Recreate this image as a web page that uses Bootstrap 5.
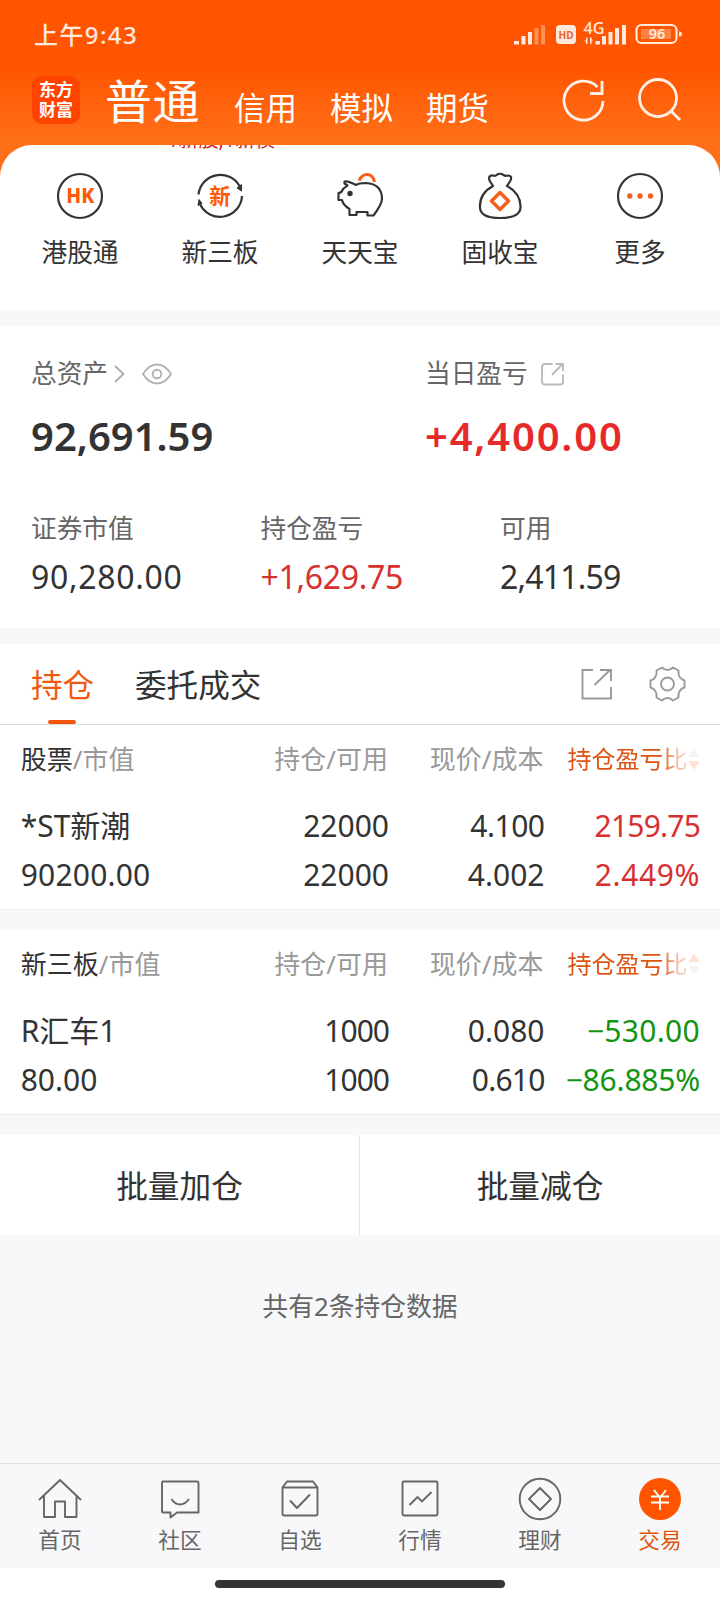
<!DOCTYPE html>
<html lang="zh-CN">
<head>
<meta charset="utf-8">
<meta name="viewport" content="width=device-width, initial-scale=1">
<title>交易</title>
<link rel="stylesheet" href="https://cdn.jsdelivr.net/npm/bootstrap@5.3.0/dist/css/bootstrap.min.css">
<style>
body{font-family:"Noto Sans","Noto Sans CJK SC",sans-serif;color:#333;background:#f7f8fa;width:720px;height:1600px;overflow:hidden}
svg{display:block;flex:none;overflow:visible}
.app{height:1600px}
.top{height:177px;background:linear-gradient(#ff5500 66px,#ff6f18 140px);color:#fff}
.status{height:70px;padding:0 38px 0 34px}
.clock{font-size:24px;line-height:70px;font-weight:500;color:#ffe9dd;letter-spacing:1.400px}
.heads{height:75px;padding:0 38px 0 32px}
.logo{width:48px;height:48px;border-radius:10px;background:#ff4400;margin-top:6px;font-size:17px;font-weight:700;line-height:20px;text-align:center;padding-top:4px}
.h-main{font-size:47px;line-height:62px;margin-left:25px;margin-right:2px;letter-spacing:.5px;font-weight:400}
.h-sub{font-size:31.500px;line-height:40px;margin-top:18px;margin-left:32px;width:64px}
.sheet{margin-top:-32px;height:165px;border-radius:32px 32px 0 0;background:#fff;position:relative}
.hint{height:5px;overflow:hidden;padding-left:167px;color:#cf1f28;font-size:20px;line-height:20px}
.quick{padding:0 10px;height:130px}
.quick>div{width:140px;padding-top:21px}
.quick span{font-size:25.700px;line-height:36px;margin-top:14px}
.gap16{height:16px}
.assets{height:302px}
.lab{font-size:25.700px;line-height:36px;color:#666}
.big{font-size:40px;line-height:50px;font-weight:600}
.mid{font-size:32px;line-height:42px}
.up{color:#d63030}.down{color:#139413}
.big.up{color:#e62a29}
.tabs{height:81px;border-bottom:1px solid #dcdcdc;padding:0 34px 0 31px;font-size:31.600px;line-height:83px}
.tabs .on{color:#ef5a10;position:relative;width:64px}
.tabs .on::after{content:"";position:absolute;left:17px;top:77px;width:28px;height:4px;border-radius:2px;background:#f2560d}
.hold{padding:0 20px;border-bottom:1px solid #e9eaed}
.hold .line{display:grid;grid-template-columns:221px 148px 155.500px 155.500px;text-align:right;font-size:30px;line-height:49px;white-space:nowrap;position:relative;top:.5px}
.hold .line>:first-child{text-align:left;padding-left:.7px}
.hold .head{font-size:26px;line-height:66px;color:#999;margin-bottom:9px}
.hold .head>:nth-child(2),.hold .head>:nth-child(3){padding-right:1px}
.dark{color:#333}
.hold .sortcol{padding-left:23px;font-size:24px;color:#dc5413;-webkit-mask-image:linear-gradient(90deg,#000 74%,rgba(0,0,0,.35) 86%,rgba(0,0,0,.17) 95%);mask-image:linear-gradient(90deg,#000 74%,rgba(0,0,0,.35) 86%,rgba(0,0,0,.17) 95%)}
.batch{height:100px;font-size:31.700px;line-height:102px;text-align:center}
.batch>div:first-child{width:359px}
.batch>div+div{border-left:1px solid #e8e8ea}
.foot{font-size:25.800px;line-height:36px;color:#666;padding-top:53px;height:228px}
.tabbar{height:105px;border-top:1px solid #dedfe1;background:#f8f8fb}
.tabbar>div{width:120px;padding-top:13px;color:#666}
.tabbar span{font-size:21.700px;line-height:30px;margin-top:4px}
.homebar{height:32px}
.homebar i{width:290px;height:8px;border-radius:4px;background:#333;margin-top:12px}
</style>
</head>
<body>
<div class="app d-flex flex-column">
<header class="top flex-shrink-0">
  <div class="status d-flex justify-content-between">
    <div class="clock">上午9:43</div>
    <svg width="170" height="70" viewBox="512 0 170 70" fill="#ffe9dd">
      <path d="M514 41h5v3.500h-5zM521.500 36h4v8.500h-4zM528 32h4v12.500h-4z"/>
      <path d="M534.500 28h4v16.500h-4zM541 25h4v19.500h-4z" opacity=".4"/>
      <rect x="556" y="25" width="20" height="19" rx="4"/>
      <text x="566" y="38.500" font-size="10.500" font-weight="700" text-anchor="middle" textLength="15" lengthAdjust="spacingAndGlyphs" fill="#e8662c">HD</text>
      <text x="583.500" y="33.500" font-size="15.500" font-weight="500" textLength="21" lengthAdjust="spacingAndGlyphs">4G</text>
      <path d="M587.500 37.500v6.500h-1.500v-2l-2-1.500h2v-3zM590 44v-6.500h1.500v1.500l2 1.500h-2v3.500z"/>
      <path d="M595.500 41h4.500v3.500h-4.500zM602 36h4v8.500h-4zM608.500 32h4v12.500h-4zM615 28h4v16.500h-4zM622 25h4v19.500h-4z"/>
      <rect x="636.500" y="25" width="40" height="18" rx="5" fill="none" stroke="#ffe9dd" stroke-width="2.200"/>
      <rect x="641" y="29" width="30" height="10" opacity=".3"/>
      <path d="M679 31.500q3 0 3 2.500t-3 2.500z"/>
      <text x="657" y="39.200" font-size="14.500" font-weight="600" text-anchor="middle">96</text>
    </svg>
  </div>
  <div class="heads d-flex">
    <div class="logo">东方<br>财富</div>
    <div class="h-main">普通</div>
    <div class="h-sub">信用</div><div class="h-sub">模拟</div><div class="h-sub">期货</div>
    <svg class="ms-auto" width="122" height="60" viewBox="560 70 122 60" fill="none" stroke="#fff1e8" stroke-width="2.800">
      <path d="M603 101A19.500 19.500 0 1 1 597.500 87M602 81v12.500H590"/>
      <circle cx="658" cy="98" r="18.500"/><path d="M671 111l9 9"/>
    </svg>
  </div>
</header>
<section class="sheet flex-shrink-0">
  <div class="hint d-flex align-items-end">1新股,1新债</div>
  <div class="quick d-flex">
    <div class="d-flex flex-column align-items-center">
      <svg width="50" height="50" viewBox="0 0 50 50"><circle cx="25" cy="25" r="22" fill="none" stroke="#333" stroke-width="2.200"/><text x="25.300" y="32.300" font-size="20.500" font-weight="800" text-anchor="middle" textLength="28" lengthAdjust="spacingAndGlyphs" fill="#ff5a0a">HK</text></svg><span>港股通</span></div>
    <div class="d-flex flex-column align-items-center">
      <svg width="50" height="50" viewBox="0 0 50 50"><path d="M3.500 23.500A22 22 0 0 1 44.500 15M47 25A22 22 0 0 1 5 33" fill="none" stroke="#333" stroke-width="2.200"/><path d="M42 17l4.500-3.500v6.500zM3 34.500l1-6 3 4z" fill="#333" stroke="#333"/><text x="25" y="32.500" font-size="21.500" font-weight="700" text-anchor="middle" fill="#ff5a0a">新</text></svg><span>新三板</span></div>
    <div class="d-flex flex-column align-items-center">
      <svg width="50" height="50" viewBox="0 0 50 50" fill="none" stroke="#333" stroke-width="2.200" stroke-linejoin="round"><path d="M21 14Q24 12 31 12Q47 13 47 28Q47 33 38.500 44.500H32.500V41H21.500V44H14.500V38Q8 34 7 29H3.500V22Q6.500 22 8 18L12.500 14.500L9.500 12.500V10.500Q13 9.500 21 14Z"/><circle cx="15" cy="22.500" r="1.600" fill="#333"/><path d="M24 9.500Q27 3.500 32 3.500Q38 3.500 39.500 11" stroke="#f4601a" stroke-width="3"/></svg><span>天天宝</span></div>
    <div class="d-flex flex-column align-items-center">
      <svg width="50" height="50" viewBox="0 0 50 50" fill="none" stroke="#333" stroke-width="2.200" stroke-linejoin="round"><path d="M18 15L14.500 9.500Q13 4 18 4.500Q20.500 5.500 21.500 4Q25 1.500 28.500 4Q30.500 5.500 33 4.500Q37.500 4.500 35.500 9.500L32 15Q45 22 45.500 35Q46.500 47 25 47Q4 47 5 35Q5 22 18 15Z"/><path d="M25 21.500L33.500 30L25 38.500L16.500 30Z" stroke="#f4601a" stroke-width="3.500"/></svg><span>固收宝</span></div>
    <div class="d-flex flex-column align-items-center">
      <svg width="50" height="50" viewBox="0 0 50 50"><circle cx="25" cy="25" r="22" fill="none" stroke="#333" stroke-width="2.200"/><g fill="#f4601a"><circle cx="14.800" cy="25" r="2.700"/><circle cx="25" cy="25" r="2.700"/><circle cx="35.500" cy="25" r="2.700"/></g></svg><span>更多</span></div>
  </div>
</section>
<div class="gap16 flex-shrink-0"></div>
<section class="assets bg-white flex-shrink-0">
  <div class="d-flex" style="padding:30px 0 0 31px">
    <div style="width:394px">
      <div class="lab d-flex align-items-center">总资产
        <svg width="12" height="18" style="margin-left:6px" viewBox="0 0 12 18" fill="none" stroke="#aaa" stroke-width="1.800"><path d="M1 1l8.500 8L1 17"/></svg>
        <svg width="32" height="22" style="margin-left:15px" viewBox="0 0 32 22" fill="none" stroke="#b3b3b3" stroke-width="1.900"><path d="M2 11Q8 1.500 16 1.500T30 11Q24 20.500 16 20.500T2 11Z"/><circle cx="16" cy="11" r="4.300"/></svg></div>
      <div class="big" style="margin-top:19px">92,691.59</div>
    </div>
    <div>
      <div class="lab d-flex align-items-center">当日盈亏
        <svg width="24" height="24" style="margin-left:12px" viewBox="0 0 24 24" fill="none" stroke="#bbb" stroke-width="1.900"><path d="M12.500 2H5Q2 2 2 5v15q0 2.500 3 2.500h15q3 0 3-2.500v-7.500M12 13L22.500 2M15.500 2H23v7"/></svg></div>
      <div class="big up" style="margin-top:19px;letter-spacing:1.800px">+4,400.00</div>
    </div>
  </div>
  <div class="d-flex" style="padding:50px 0 0 31px">
    <div style="width:229.500px"><div class="lab">证券市值</div><div class="mid" style="margin-top:9px;letter-spacing:.7px">90,280.00</div></div>
    <div style="width:239.500px"><div class="lab">持仓盈亏</div><div class="mid up" style="margin-top:9px;letter-spacing:-.3px">+1,629.75</div></div>
    <div><div class="lab">可用</div><div class="mid" style="margin-top:9px;letter-spacing:-.8px">2,411.59</div></div>
  </div>
</section>
<div class="gap16 flex-shrink-0"></div>
<nav class="tabs bg-white d-flex align-items-center flex-shrink-0">
  <div class="on">持仓</div><div style="margin-left:40px">委托成交</div>
  <svg class="ms-auto" width="32" height="32" viewBox="0 0 32 32" fill="none" stroke="#999" stroke-width="1.900"><path d="M13 2H2.500V30.500H31V19M14.500 17L30 2M20 2h11v11"/></svg>
  <svg width="38" height="38" style="margin-left:36.500px" viewBox="-19.500 -19 38 38" fill="none" stroke="#999" stroke-width="1.900" stroke-linejoin="round"><path d="M-5.500 -16.500Q-3 -14 0 -14T5.500 -16.500L11 -13.500Q10.500 -9.500 12.200 -7T17 -3.500V3.500Q14 4 12.200 7T11 13.500L5.500 16.500Q3 14 0 14T-5.500 16.500L-11 13.500Q-10.500 9.500 -12.200 7T-17 3.500V-3.500Q-14 -4 -12.200 -7T-11 -13.500Z"/><circle r="6.500"/></svg>
</nav>
<section class="hold bg-white flex-shrink-0" style="height:185px">
  <div class="line head"><div><span class="dark">股票</span>/市值</div><div>持仓/可用</div><div>现价/成本</div>
    <div class="sortcol d-flex align-items-center">持仓盈亏比<svg width="12" height="24" viewBox="0 0 12 24"><path d="M6 1l5.500 9H.5z" fill="#bbb"/><path d="M6 23l5.500-9H.5z" fill="#f50"/></svg></div></div>
  <div class="line"><div>*ST新潮</div><div>22000</div><div style="letter-spacing:-.5px">4.100</div><div class="up" style="letter-spacing:-.8px">2159.75</div></div>
  <div class="line"><div style="letter-spacing:.2px">90200.00</div><div>22000</div><div>4.002</div><div class="up" style="letter-spacing:.6px">2.449%</div></div>
</section>
<div class="flex-shrink-0" style="height:20px"></div>
<section class="hold bg-white flex-shrink-0" style="height:185px">
  <div class="line head"><div><span class="dark">新三板</span>/市值</div><div>持仓/可用</div><div>现价/成本</div>
    <div class="sortcol d-flex align-items-center">持仓盈亏比<svg width="12" height="24" viewBox="0 0 12 24"><path d="M6 1l5.500 9H.5z" fill="#f50"/><path d="M6 23l5.500-9H.5z" fill="#bbb"/></svg></div></div>
  <div class="line"><div>R汇车1</div><div style="letter-spacing:-1px">1000</div><div>0.080</div><div class="down" style="letter-spacing:.3px">−530.00</div></div>
  <div class="line"><div>80.00</div><div style="letter-spacing:-1px">1000</div><div style="letter-spacing:-.8px">0.610</div><div class="down" style="letter-spacing:-.2px">−86.885%</div></div>
</section>
<div class="flex-shrink-0" style="height:20px"></div>
<section class="batch bg-white d-flex flex-shrink-0"><div>批量加仓</div><div class="flex-fill">批量减仓</div></section>
<div class="foot text-center flex-shrink-0">共有2条持仓数据</div>
<nav class="tabbar d-flex flex-shrink-0">
  <div class="d-flex flex-column align-items-center"><svg width="44" height="44" viewBox="0 0 44 44" fill="none" stroke="#666" stroke-width="1.900"><path d="M1 23L22 3L43 23M6 19V40H17V24.500H27V40H38.500V19" stroke-linejoin="round"/></svg><span>首页</span></div>
  <div class="d-flex flex-column align-items-center"><svg width="44" height="44" viewBox="0 0 44 44" fill="none" stroke="#666" stroke-width="1.900" stroke-linejoin="round"><path d="M5 4.500H39Q40.500 4.500 40.500 6V35.500H19L12.500 40.500V35.500H5Q4 35.500 4 34.500V6Q4 4.500 5 4.500Z"/><path d="M13.500 22Q17 27.500 22 27.500T31 22"/></svg><span>社区</span></div>
  <div class="d-flex flex-column align-items-center"><svg width="44" height="44" viewBox="0 0 44 44" fill="none" stroke="#666" stroke-width="1.900" stroke-linejoin="round"><path d="M4.500 10.500L9 4.500H35L39.500 10.500V37Q39.500 38.500 37.500 38.500H6.500Q4.500 38.500 4.500 37ZM4.500 10.500H39.500M12 23.500L19 31L32 17.500"/></svg><span>自选</span></div>
  <div class="d-flex flex-column align-items-center"><svg width="44" height="44" viewBox="0 0 44 44" fill="none" stroke="#666" stroke-width="1.900"><rect x="4.500" y="4.500" width="35" height="34" rx="1.500"/><path d="M11.500 28L19.500 20L24 24.500L33.500 15"/></svg><span>行情</span></div>
  <div class="d-flex flex-column align-items-center"><svg width="44" height="44" viewBox="0 0 44 44" fill="none" stroke="#666" stroke-width="1.900" stroke-linejoin="round"><circle cx="22" cy="22" r="20.300"/><path d="M22 11L33 22L22 33L11 22Z"/></svg><span>理财</span></div>
  <div class="d-flex flex-column align-items-center"><svg width="44" height="44" viewBox="0 0 44 44" fill="none" stroke="#fff" stroke-width="1.800"><circle cx="22" cy="22" r="21" fill="#f50" stroke="none"/><path d="M16 13l5.500 7M28 13l-5.500 7M13 19.500H31M13 25.500H31M22 19.500V33"/></svg><span style="color:#e0560d">交易</span></div>
</nav>
<div class="homebar bg-white d-flex justify-content-center flex-shrink-0"><i></i></div>
</div>
<script src="https://cdn.jsdelivr.net/npm/bootstrap@5.3.0/dist/js/bootstrap.bundle.min.js"></script>
</body>
</html>
